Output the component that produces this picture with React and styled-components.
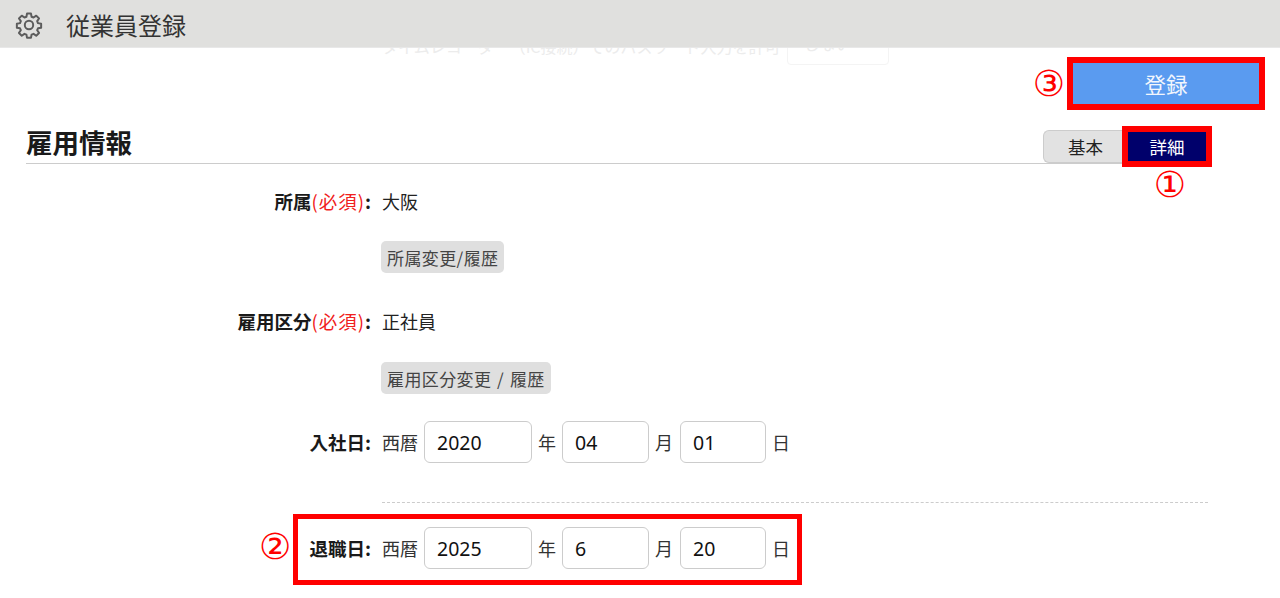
import React from "react";
import styled, { createGlobalStyle } from "styled-components";

const GlobalStyle = createGlobalStyle`
  html, body {
    margin: 0;
    padding: 0;
    background: #fff;
    font-family: "Noto Sans CJK JP", "Liberation Sans", sans-serif;
    color: #222;
  }
`;
const Page = styled.div`
  width: 1280px;
  height: 598px;
  overflow: hidden;
  position: relative;
`;
const Header = styled.header`
  height: 48px;
  background: #e0e0de;
  border-bottom: 1px solid #e8e8e8;
  box-sizing: border-box;
  display: flex;
  align-items: center;
  padding: 2px 0 0 15px;
  gap: 23px;
  position: relative;
  z-index: 1;
`;
const HeaderTitle = styled.h1`
  margin: 0;
  font-size: 24px;
  font-weight: 400;
  line-height: 1;
  color: #333;
`;
const Ghost = styled.div`
  position: absolute;
  top: 27px;
  left: 382px;
  display: flex;
  align-items: center;
  gap: 6px;
  font-size: 16px;
  color: #ececec;
`;
const GhostBox = styled.span`
  width: 102px;
  height: 38px;
  box-sizing: border-box;
  border: 1px solid #f4f4f4;
  border-radius: 4px;
  padding: 3px 16px;
`;
const Content = styled.main`
  padding: 9px 72px 0 26px;
`;
const ActionRow = styled.div`
  display: flex;
  justify-content: flex-end;
  align-items: center;
  gap: 2px;
  margin-right: -57px;
`;
const SubmitButton = styled.button`
  width: 198px;
  height: 53px;
  box-sizing: border-box;
  border: 6px solid #ff0000;
  background: #5a9bf0;
  color: #f2f6fd;
  font: inherit;
  font-size: 21.5px;
  padding: 0;
`;
const SectionHead = styled.div`
  display: flex;
  justify-content: space-between;
  align-items: flex-end;
  height: 39px;
  margin-top: 14px;
  border-bottom: 1px solid #ccc;
  position: relative;
`;
const SectionTitle = styled.h2`
  margin: 0 0 4px;
  font-size: 26.5px;
  font-weight: 700;
  line-height: 34px;
  color: #1a1a1a;
`;
const Tabs = styled.div`
  display: flex;
  align-items: flex-start;
  position: absolute;
  right: -4px;
  top: 2px;
`;
const Tab = styled.button`
  box-sizing: border-box;
  font: inherit;
  font-size: 17.5px;
  padding: 0;
  text-align: center;
  ${(p) =>
    p.$active
      ? `width: 90px; height: 41px; background: #00006b; color: #fff; border: 6px solid #ff0000;`
      : `width: 79px; height: 33px; margin-top: 4px; padding-left: 5px; background: #e2e2e2; color: #222; border: 1px solid #ccc; border-right: none; border-radius: 6px 0 0 6px;`}
`;
const Badge = styled.span`
  color: #ff0000;
  font-size: 36px;
  line-height: 1;
  font-family: "DejaVu Sans", "Noto Sans CJK JP", sans-serif;
`;
const TabBadge = styled(Badge)`
  position: absolute;
  top: 41px;
  right: 26px;
`;
const FieldGrid = styled.div`
  display: grid;
  grid-template-columns: 345px 1fr;
  column-gap: 11px;
  padding-top: 20px;
  width: 1182px;
`;
const Label = styled.div`
  text-align: right;
  font-size: 18.5px;
  font-weight: 700;
  line-height: ${(p) => p.$h || 34}px;
  height: ${(p) => p.$h || 34}px;
  color: #1a1a1a;
`;
const Required = styled.span`
  color: #f02020;
  font-weight: 400;
  letter-spacing: 1px;
`;
const Value = styled.div`
  font-size: 18px;
  line-height: 34px;
  color: #222;
`;
const GrayButton = styled.button`
  display: block;
  height: 32px;
  box-sizing: border-box;
  border: none;
  border-radius: 5px;
  background: #dfdfdf;
  color: #444;
  font: inherit;
  font-size: 17px;
  letter-spacing: 0.4px;
  word-spacing: 1.5px;
  padding: 0 6px;
  margin: ${(p) => p.$top}px 0 ${(p) => p.$bottom}px -1px;
`;
const DateRow = styled.div`
  display: flex;
  align-items: center;
  height: 42px;
  font-size: 18px;
  color: #333;
`;
const DateInput = styled.input`
  box-sizing: border-box;
  width: ${(p) => p.$w}px;
  height: 42px;
  margin: 0 6px 0 ${(p) => p.$ml}px;
  border: 1px solid #ccc;
  border-radius: 6px;
  padding: 0 12px;
  font-family: "Noto Sans", "Liberation Sans", sans-serif;
  font-size: 19.5px;
  color: #111;
  background: #fff;
`;
const Divider = styled.hr`
  grid-column: 2;
  width: 100%;
  margin: 39px 0 24px;
  border: none;
  border-top: 1px dashed #ccc;
`;
const Highlight = styled.div`
  grid-column: 1 / 3;
  display: grid;
  grid-template-columns: 345px 1fr;
  column-gap: 11px;
  align-items: center;
  position: relative;
`;
const HighlightBox = styled.div`
  position: absolute;
  left: 267px;
  top: -13px;
  width: 509px;
  height: 71px;
  box-sizing: border-box;
  border: 5px solid #ff0000;
  pointer-events: none;
`;
const RowBadge = styled(Badge)`
  position: absolute;
  left: 233px;
  top: 2px;
`;

const GearIcon = () => (
  <svg width="28" height="28" viewBox="0 0 24 24" fill="none" stroke="#5c5c5c" strokeWidth="1.7" strokeLinejoin="round">
    <path d="M10.3 2.6h3.4l.5 2.7 1.7.7 2.3-1.6 2.4 2.4-1.6 2.3.7 1.7 2.7.5v3.4l-2.7.5-.7 1.7 1.6 2.3-2.4 2.4-2.3-1.6-1.7.7-.5 2.7h-3.4l-.5-2.7-1.7-.7-2.3 1.6-2.4-2.4 1.6-2.3-.7-1.7-2.7-.5v-3.4l2.7-.5.7-1.7-1.6-2.3 2.4-2.4 2.3 1.6 1.7-.7z" transform="translate(0 -.4)" />
    <circle cx="12" cy="12" r="3.6" />
  </svg>
);

const DateFields = ({ year, month, day }) => (
  <DateRow>
    西暦
    <DateInput $w={108} $ml={6} defaultValue={year} />年
    <DateInput $w={87} $ml={6} defaultValue={month} />月
    <DateInput $w={86} $ml={7} defaultValue={day} />日
  </DateRow>
);

const App = () => {
  return (
    <Page>
      <GlobalStyle />
      <Header>
        <GearIcon />
        <HeaderTitle>従業員登録</HeaderTitle>
      </Header>
      <Ghost>
        <span>タイムレコーダー（IC接続）でのパスワード入力を許可</span>
        <GhostBox>しない</GhostBox>
      </Ghost>
      <Content>
        <ActionRow>
          <Badge>③</Badge>
          <SubmitButton>登録</SubmitButton>
        </ActionRow>
        <SectionHead>
          <SectionTitle>雇用情報</SectionTitle>
          <Tabs>
            <Tab>基本</Tab>
            <Tab $active>詳細</Tab>
            <TabBadge>①</TabBadge>
          </Tabs>
        </SectionHead>
        <FieldGrid>
          <Label>
            所属<Required>(必須)</Required>:
          </Label>
          <div>
            <Value>大阪</Value>
            <GrayButton $top={23} $bottom={31}>所属変更/履歴</GrayButton>
          </div>
          <Label>
            雇用区分<Required>(必須)</Required>:
          </Label>
          <div>
            <Value>正社員</Value>
            <GrayButton $top={24} $bottom={27}>雇用区分変更 / 履歴</GrayButton>
          </div>
          <Label $h={42}>入社日:</Label>
          <DateFields year="2020" month="04" day="01" />
          <Divider />
          <Highlight>
            <HighlightBox />
            <RowBadge>②</RowBadge>
            <Label>退職日:</Label>
            <DateFields year="2025" month="6" day="20" />
          </Highlight>
        </FieldGrid>
      </Content>
    </Page>
  );
};

export default App;
